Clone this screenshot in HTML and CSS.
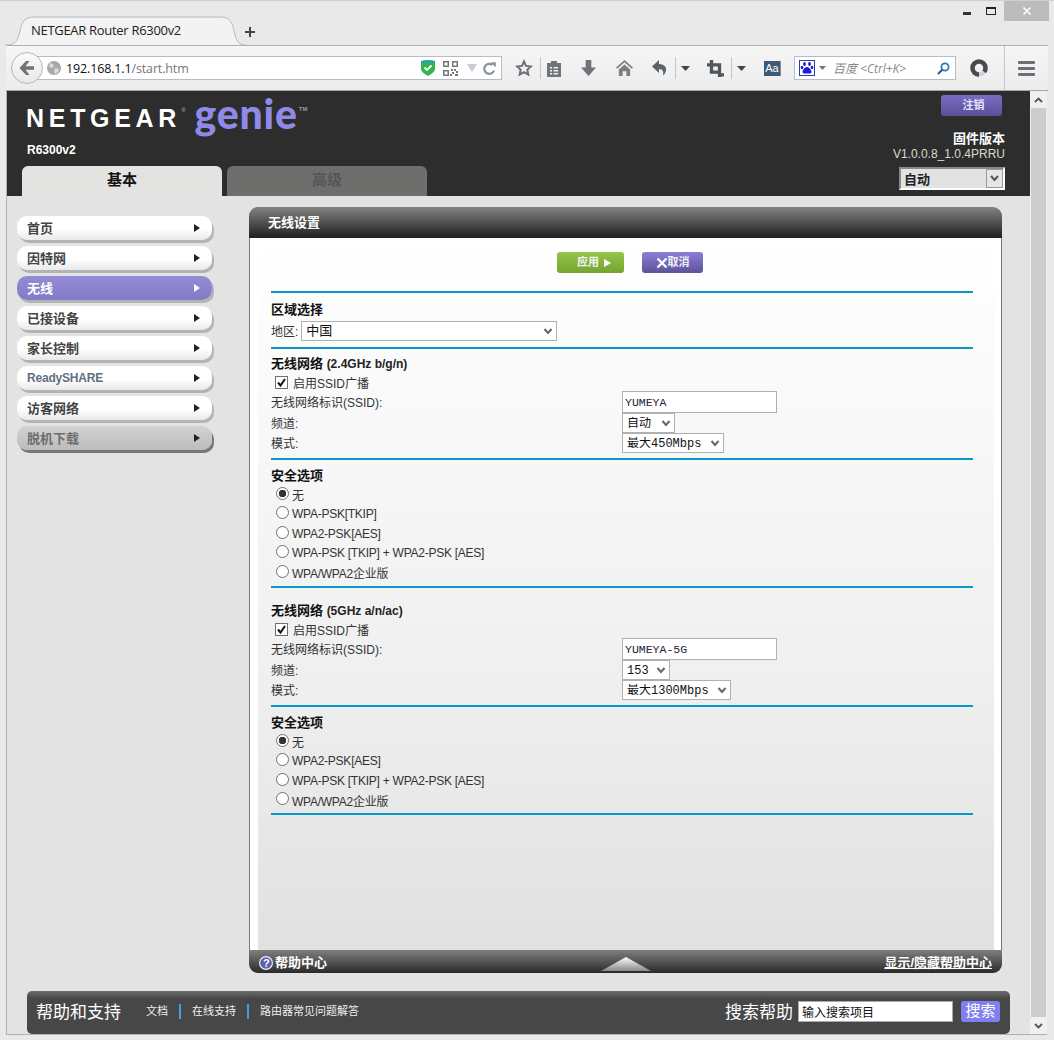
FILE: index.html
```html
<!DOCTYPE html>
<html lang="zh">
<head>
<meta charset="utf-8">
<title>NETGEAR Router R6300v2</title>
<link rel="stylesheet" href="styles.css">
</head>
<body>
<div class="window">
  <div class="tabbar">
    <div class="tab">
      <svg class="tab-shape" width="240" height="30" viewBox="0 0 240 30"><path d="M0 29C9 29 12 25 14 15 16 5 19 1 29 1H214C223 1 226 5 228 15 230 25 233 29 240 29" fill="#f3f3f3" stroke="#b4bcc4"/></svg>
      <span class="tab-title">NETGEAR Router R6300v2</span>
    </div>
    <svg class="newtab" width="12" height="12" viewBox="0 0 12 12"><path d="M6 1v10M1 6h10" stroke="#444" stroke-width="2"/></svg>
    <div class="winctl">
      <span class="win-min"></span>
      <span class="win-max"></span>
      <span class="win-close"><svg width="10" height="10" viewBox="0 0 10 10"><path d="M1.500 1.500l7 7M8.500 1.500l-7 7" stroke="#fff" stroke-width="1.600"/></svg></span>
    </div>
  </div>

  <div class="toolbar">
    <div class="backbtn"><svg width="18" height="16" viewBox="0 0 18 16"><path d="M8 1L1.500 8 8 15h3.500L7.500 9.800H16V6.200H7.500L11.500 1z" fill="#6f7378"/></svg></div>
    <div class="urlbar">
      <svg class="globe" width="14" height="14" viewBox="0 0 14 14"><circle cx="7" cy="7" r="7" fill="#a6a8aa"/><path d="M3 2l3 1 1 2-2 2-3-1zM8 7l4 1-1 3-3 2-1-3z" fill="#dcdcdc"/></svg>
      <span class="url"><b>192.168.1.1</b><i>/start.htm</i></span>
      <svg class="u-shield" width="14" height="16" viewBox="0 0 14 16"><path d="M0 1l7-1 7 1v8c0 3-4 5-7 7-3-2-7-4-7-7z" fill="#35b44a"/><path d="M0 1l7-1 7 1v2H0z" fill="#2a9fb0"/><path d="M3.500 7.500l2.500 2.500 4.500-4.500" stroke="#fff" stroke-width="1.800" fill="none"/></svg>
      <svg class="u-qr" width="15" height="15" viewBox="0 0 15 15"><path d="M0 0h6v6H0zM1.500 1.500v3h3v-3zM9 0h6v6H9zm1.500 1.500v3h3v-3zM0 9h6v6H0zm1.500 1.500v3h3v-3zM8 8h2v2H8zM11 8h2v2h-2zM13 10h2v2h-2zM9 11h2v2H9zM12 13h3v2h-3zM7 13h2v2H7z" fill="#777" fill-rule="evenodd"/></svg>
      <svg class="u-drop" width="10" height="8" viewBox="0 0 10 8"><path d="M0 0h10L5 8z" fill="#c6ccd6"/></svg>
      <svg class="u-reload" width="13" height="13" viewBox="0 0 13 13"><path d="M11 8.500A5 5 0 1 1 9.500 3" stroke="#8a9096" stroke-width="2.200" fill="none"/><path d="M8 0l5 .5-.5 5z" fill="#8a9096"/></svg>
    </div>
    <svg class="t-star" width="18" height="18" viewBox="0 0 18 18"><path d="M9 2.500l2 4.400 4.800.6-3.500 3.300 1 4.800L9 13.200l-4.300 2.400 1-4.800-3.500-3.300 4.800-.6z" fill="none" stroke="#6a7076" stroke-width="2"/></svg>
    <span class="t-sep t-sep1"></span>
    <svg class="t-clip" width="16" height="17" viewBox="0 0 16 17"><path d="M1 3h4V1h6v2h4v14H1zM4 7v1.500h2V7zm3.500 0v1.500H12V7zM4 10v1.500h2V10zm3.500 0v1.500H12V10zM4 13v1.500h2V13zm3.500 0v1.500H12V13z" fill="#6e7479" fill-rule="evenodd"/></svg>
    <svg class="t-down" width="15" height="16" viewBox="0 0 16 17"><path d="M5 0h6v8h5l-8 9-8-9h5z" fill="#6e7479"/></svg>
    <svg class="t-home" width="17" height="16" viewBox="0 0 18 17"><path d="M9 0l9 8-1.300 1.300L9 2.500 1.300 9.300 0 8zM3 10l6-5.300L15 10v7h-4v-5H7v5H3z" fill="#7a7f84"/></svg>
    <svg class="t-undo" width="18" height="16" viewBox="0 0 18 16"><path d="M8 0L1 6.500 8 13V9.200c3-.4 5 1.300 4 6.300 4-3 5.500-10.900-4-11.500z" fill="#5c6369"/></svg>
    <span class="t-sep t-sep2"></span>
    <svg class="t-caret t-caret1" width="9" height="5" viewBox="0 0 9 5"><path d="M0 0h9L4.500 5z" fill="#444"/></svg>
    <svg class="t-crop" width="17" height="17" viewBox="0 0 18 18"><path d="M3 0h3.500v3.500H15V14h3v3.500h-3V18h-3.500v-3.500H3V7H0V3.500h3zM6.500 7v4H11.500V7z" fill="#4f565c" fill-rule="evenodd"/></svg>
    <span class="t-sep t-sep3"></span>
    <svg class="t-caret t-caret2" width="9" height="5" viewBox="0 0 9 5"><path d="M0 0h9L4.500 5z" fill="#444"/></svg>
    <span class="t-aa">Aa</span>
    <div class="searchbar">
      <svg class="paw" width="16" height="16" viewBox="0 0 16 16"><rect x=".5" y=".5" width="15" height="15" fill="#fff" stroke="#2244aa"/><g fill="#1a1ae0"><ellipse cx="5.500" cy="4" rx="1.400" ry="1.900"/><ellipse cx="10.500" cy="4" rx="1.400" ry="1.900"/><ellipse cx="3" cy="7.500" rx="1.300" ry="1.700"/><ellipse cx="13" cy="7.500" rx="1.300" ry="1.700"/><path d="M8 7c2 0 4.500 3 4.500 5 0 2-2.500 1.500-4.500 1.500S3.500 14 3.500 12c0-2 2.500-5 4.500-5z"/></g></svg>
      <svg class="paw-caret" width="7" height="4" viewBox="0 0 7 4"><path d="M0 0h7L3.500 4z" fill="#777"/></svg>
      <span class="search-hint">百度 &lt;Ctrl+K&gt;</span>
      <svg class="mag" width="13" height="13" viewBox="0 0 13 13"><circle cx="8" cy="5" r="3.600" fill="none" stroke="#2f78c0" stroke-width="1.800"/><path d="M5.500 7.500L1 12" stroke="#2460a0" stroke-width="2.200"/></svg>
    </div>
    <svg class="t-avatar" width="18" height="18" viewBox="0 0 18 18"><circle cx="9" cy="9" r="6.500" fill="none" stroke="#cfd2d4" stroke-width="4"/><circle cx="9" cy="9" r="6.500" fill="none" stroke="#454b50" stroke-width="4.500" stroke-dasharray="34 6.800" transform="rotate(90 9 9)"/></svg>
    <span class="t-sep t-sep4"></span>
    <span class="t-menu"><i></i><i></i><i></i></span>
  </div>

  <div class="viewport">
    <div class="page">
      <header class="head">
        <div class="brand">
          <div class="logo"><span class="logo-ng">NETGEAR</span><span class="logo-reg">®</span><span class="logo-genie">genie</span><span class="logo-tm">TM</span></div>
          <div class="model">R6300v2</div>
          <nav class="tabs">
            <span class="ptab ptab-on">基本</span>
            <span class="ptab ptab-off">高级</span>
          </nav>
        </div>
        <div class="head-right">
          <span class="logout">注销</span>
          <div class="fw-label">固件版本</div>
          <div class="fw-ver">V1.0.0.8_1.0.4PRRU</div>
          <select class="lang"><option>自动</option></select>
        </div>
      </header>

      <div class="main">
        <aside class="side">
          <div class="mbtn">首页<span class="arr"></span></div>
          <div class="mbtn">因特网<span class="arr"></span></div>
          <div class="mbtn mbtn-on">无线<span class="arr"></span></div>
          <div class="mbtn">已接设备<span class="arr"></span></div>
          <div class="mbtn">家长控制<span class="arr"></span></div>
          <div class="mbtn mbtn-rs">ReadySHARE<span class="arr"></span></div>
          <div class="mbtn">访客网络<span class="arr"></span></div>
          <div class="mbtn mbtn-off">脱机下载<span class="arr"></span></div>
        </aside>

        <section class="panel">
          <div class="panel-head">无线设置</div>
          <div class="panel-body">
            <div class="inner">
              <div class="actions">
                <span class="act act-apply">应用<span class="act-arr"></span></span>
                <span class="act act-cancel"><svg width="12" height="12" viewBox="0 0 12 12"><path d="M1.500 1.500l9 9M10.500 1.500l-9 9" stroke="#fff" stroke-width="2.400"/></svg>取消</span>
              </div>

              <div class="sec sec-region">
                <div class="title">区域选择</div>
                <div class="region"><span>地区:</span><select class="sel sel-region"><option>中国</option></select></div>
              </div>

              <div class="sec sec-net1">
                <div class="title">无线网络 <small>(2.4GHz b/g/n)</small></div>
                <label class="chk"><input type="checkbox" checked>启用SSID广播</label>
                <div class="field field-ssid"><span>无线网络标识(SSID):</span><input class="txt" type="text" value="YUMEYA"></div>
                <div class="field"><span>频道:</span><select class="sel sel-auto"><option>自动</option></select></div>
                <div class="field"><span>模式:</span><select class="sel sel-450"><option>最大450Mbps</option></select></div>
              </div>

              <div class="sec sec-sec1">
                <div class="title">安全选项</div>
                <label class="opt"><input type="radio" name="s1" checked>无</label>
                <label class="opt"><input type="radio" name="s1">WPA-PSK[TKIP]</label>
                <label class="opt"><input type="radio" name="s1">WPA2-PSK[AES]</label>
                <label class="opt"><input type="radio" name="s1">WPA-PSK [TKIP] + WPA2-PSK [AES]</label>
                <label class="opt"><input type="radio" name="s1">WPA/WPA2企业版</label>
              </div>

              <div class="sec sec-net2">
                <div class="title">无线网络 <small>(5GHz a/n/ac)</small></div>
                <label class="chk"><input type="checkbox" checked>启用SSID广播</label>
                <div class="field field-ssid"><span>无线网络标识(SSID):</span><input class="txt" type="text" value="YUMEYA-5G"></div>
                <div class="field"><span>频道:</span><select class="sel sel-153"><option>153</option></select></div>
                <div class="field"><span>模式:</span><select class="sel sel-1300"><option>最大1300Mbps</option></select></div>
              </div>

              <div class="sec sec-sec2">
                <div class="title">安全选项</div>
                <label class="opt"><input type="radio" name="s2" checked>无</label>
                <label class="opt"><input type="radio" name="s2">WPA2-PSK[AES]</label>
                <label class="opt"><input type="radio" name="s2">WPA-PSK [TKIP] + WPA2-PSK [AES]</label>
                <label class="opt"><input type="radio" name="s2">WPA/WPA2企业版</label>
              </div>
              <div class="sec sec-end"></div>
            </div>
          </div>
          <div class="panel-foot">
            <span class="foot-help"><svg width="14" height="14" viewBox="0 0 14 14"><circle cx="7" cy="7" r="7" fill="#eef"/><circle cx="7" cy="7" r="5.800" fill="#5a5fa8"/></svg><em>?</em>帮助中心</span>
            <svg class="foot-tri" width="50" height="14" viewBox="0 0 50 14"><defs><linearGradient id="tri" x1="0" y1="0" x2="0" y2="1"><stop offset="0" stop-color="#fff"/><stop offset="1" stop-color="#888"/></linearGradient></defs><path d="M25 0l25 14H0z" fill="url(#tri)"/></svg>
            <a class="foot-link">显示/隐藏帮助中心</a>
          </div>
        </section>
      </div>

      <footer class="help">
        <span class="help-title">帮助和支持</span>
        <a class="hl hl-doc">文档</a>
        <a class="hl hl-mid">在线支持</a>
        <a class="hl hl-mid">路由器常见问题解答</a>
        <span class="help-search">搜索帮助</span>
        <input class="help-input" type="text" value="输入搜索项目">
        <span class="help-btn">搜索</span>
      </footer>
    </div>

    <div class="scroll">
      <span class="sb-btn"><svg width="9" height="6" viewBox="0 0 9 6"><path d="M1 5l3.500-3.500L8 5" fill="none" stroke="#555" stroke-width="1.800"/></svg></span>
      <span class="sb-thumb"></span>
      <span class="sb-btn"><svg width="9" height="6" viewBox="0 0 9 6"><path d="M1 1l3.500 3.500L8 1" fill="none" stroke="#555" stroke-width="1.800"/></svg></span>
    </div>
  </div>
</div>
</body>
</html>
```
FILE: styles.css
```css
* { box-sizing: border-box; }
html, body { margin: 0; padding: 0; }
body {
  width: 1054px;
  height: 1040px;
  overflow: hidden;
  background: #e9e9e9;
  font-family: "Liberation Sans", "Noto Sans CJK SC", sans-serif;
  font-size: 12px;
  color: #222;
}
.window {
  height: 1040px;
  border-top: 1px solid #d0d0d0;
  padding: 0 6px;
  display: flex;
  flex-direction: column;
}

/* tab strip */
.tabbar { height: 44px; flex: none; display: flex; align-items: flex-start; margin: 0 -6px 0 0; }
.tab { position: relative; width: 240px; height: 44px; }
.tab-shape { position: absolute; left: 0; bottom: -1px; }
.tab-title {
  position: absolute; left: 25px; top: 21px;
  font: 13px/16px "Open Sans", "Noto Sans", sans-serif;
  letter-spacing: -.3px;
  color: #222;
}
.newtab { margin: 25px 0 0 -2px; }
.winctl { margin-left: auto; display: flex; align-items: flex-start; padding-right: 5px; }
.win-min { width: 8px; height: 3px; background: #333; margin-top: 11px; }
.win-max { width: 10px; height: 8px; border: 1px solid #222; border-top-width: 2px; margin: 6px 0 0 15px; }
.win-close { width: 45px; height: 20px; background: #bcbcbc; margin-left: 8px; display: flex; align-items: center; justify-content: center; }

/* toolbar */
.toolbar {
  height: 46px;
  flex: none;
  border-top: 1px solid #a9b1b9;
  border-bottom: 1px solid #a6a6a6;
  background: linear-gradient(#f6f6f6, #ececec);
  display: flex;
  align-items: center;
  position: relative;
}
.toolbar > svg { flex: none; }
.backbtn {
  width: 32px; height: 32px; flex: none;
  border-radius: 50%;
  border: 1px solid #b3b9bf;
  background: linear-gradient(#fbfbfb, #e8e8e8);
  margin-left: 5px;
  display: flex; align-items: center; justify-content: center;
  position: relative; z-index: 1;
}
.urlbar {
  width: 472px; height: 24px; flex: none;
  margin-left: -13px;
  background: #fff;
  border: 1px solid #b5bec8;
  display: flex; align-items: center;
}
.globe { margin-left: 16px; }
.url { margin-left: 5px; font: 12.500px "Open Sans", "Noto Sans", sans-serif; letter-spacing: -.14px; }
.url b { font-weight: 400; color: #111; }
.url i { font-style: normal; color: #777; }
.u-shield { margin-left: auto; }
.u-qr { margin-left: 8px; }
.u-drop { margin-left: 9px; }
.u-reload { margin: 0 5px 0 6px; }

.t-star { margin-left: 13px; }
.t-sep { width: 1px; height: 22px; background: #c2c6ca; flex: none; }
.t-sep1 { margin-left: 7px; }
.t-clip { margin-left: 5px; }
.t-down { margin-left: 19px; }
.t-home { margin-left: 20px; }
.t-undo { margin-left: 18px; }
.t-sep2 { margin-left: 6px; }
.t-caret { margin-left: 5px; }
.t-crop { margin-left: 17px; }
.t-sep3 { margin-left: 7px; }
.t-aa {
  margin-left: 18px; width: 17px; height: 15px; flex: none;
  background: #3c5a78;
  border-right: 1px solid #889;
  color: #fff;
  font: 11px/15px "Liberation Sans", sans-serif;
  text-align: center;
}
.searchbar {
  width: 162px; height: 24px; flex: none;
  margin-left: 13px;
  background: #fff;
  border: 1px solid #b5bec8;
  display: flex; align-items: center;
  padding-left: 4px;
}
.paw-caret { margin-left: 4px; }
.search-hint { margin-left: 7px; font: italic 12px "Open Sans", "Noto Sans CJK SC", sans-serif; color: #8a8a8a; white-space: nowrap; }
.mag { margin-left: auto; margin-right: 5px; }
.t-avatar { margin-left: 14px; }
.t-sep4 { margin-left: 16px; height: 44px; }
.t-menu { margin-left: 13px; width: 17px; flex: none; display: flex; flex-direction: column; gap: 3px; }
.t-menu i { height: 3px; background: #6a7075; border-radius: 1px; }

/* viewport */
.viewport { flex: none; height: 944px; margin-left: 1px; display: flex; border-bottom: 1px solid #a9b1b9; width: 1040px; box-shadow: -1px 0 0 #a9b1b9; }
.page { width: 1023px; flex: none; background: #e3e3e3; display: flex; flex-direction: column; }
.scroll { width: 17px; flex: none; background: #f0f0f0; display: flex; flex-direction: column; padding: 0 1px; }
.sb-btn { height: 17px; flex: none; display: flex; align-items: center; justify-content: center; }
.sb-thumb { flex: 1; background: #cdcdcd; }

/* header */
.head { height: 105px; flex: none; background: #2d2d2d; display: flex; justify-content: space-between; }
.brand { padding: 0 0 0 15px; display: flex; flex-direction: column; }
.logo { height: 48px; display: flex; align-items: flex-start; white-space: nowrap; color: #fff; padding-left: 4px; }
.logo-ng { font: 700 25px/26px "Liberation Sans", sans-serif; letter-spacing: 4.700px; margin-top: 14px; }
.logo-reg { font: 400 6px/8px "Liberation Sans", sans-serif; color: #bbb; margin: 15px 0 0 0; }
.logo-genie { font: 900 41px/41px "Lato", sans-serif; color: #8f8ae8; margin: 2px 0 0 9px; letter-spacing: .8px; }
.logo-tm { font: 700 6px/8px "Liberation Sans", sans-serif; color: #999; margin: 14px 0 0 1px; }
.model { height: 27px; padding: 3px 0 0 5px; font: 700 12px/16px "Liberation Sans", sans-serif; color: #fff; }
.tabs { display: flex; gap: 5px; }
.ptab { width: 200px; height: 30px; border-radius: 6px 6px 0 0; text-align: center; font-weight: 700; font-size: 15px; line-height: 28px; }
.ptab-on { background: #e3e4e2; color: #111; }
.ptab-off { background: #6e6f6d; color: #565656; }

.head-right { width: 200px; padding: 4px 25px 0 0; display: flex; flex-direction: column; align-items: flex-end; }
.logout {
  width: 61px; height: 21px; margin-right: 3px;
  padding-left: 4px;
  background: linear-gradient(#7a6ec2, #5a4f98);
  border-radius: 3px;
  color: #e8e4ff;
  font-size: 11px; font-weight: 700; line-height: 20px; text-align: center;
}
.fw-label { margin-top: 15px; font-size: 13px; font-weight: 700; line-height: 16px; color: #fff; }
.fw-ver { font-size: 12px; line-height: 14px; color: #d9d9c9; }
.lang {
  appearance: none;
  width: 106px; height: 23px; margin-top: 6px;
  border: 2px solid; border-color: #8a8a8a #fff #fff #8a8a8a;
  border-radius: 0;
  padding: 0 0 0 3px;
  font: 700 13px "Noto Sans CJK SC", sans-serif;
  color: #222;
  background: #e2e2e2 url("data:image/svg+xml,%3Csvg xmlns='http://www.w3.org/2000/svg' width='17' height='19'%3E%3Crect x='.5' y='.5' width='16' height='18' fill='%23e6e6e6' stroke='%23999'/%3E%3Cpath d='M5 7l3.500 4L12 7' fill='none' stroke='%23555' stroke-width='2'/%3E%3C/svg%3E") no-repeat right center;
}

/* main */
.main { height: 795px; flex: none; display: flex; padding: 11px 0 0 10px; }
.side { width: 232px; flex: none; padding-top: 9px; display: flex; flex-direction: column; gap: 6px; }
.mbtn {
  width: 195px; height: 24px; flex: none;
  border-radius: 10px;
  background: linear-gradient(#fff 55%, #e9e9e9);
  box-shadow: 2px 3px 0 #b4b4b4;
  padding-left: 10px;
  font-size: 13px; font-weight: 700; line-height: 23px;
  color: #444;
  display: flex; align-items: center; justify-content: space-between; padding-right: 12px;
}
.mbtn-rs { color: #5f6f80; font-size: 12px; letter-spacing: -.2px; }
.mbtn-on { background: linear-gradient(#938bd6, #837bc6); color: #fff; }
.mbtn-off { background: linear-gradient(#d2d2d2, #bcbcbc); color: #6e6e6e; box-shadow: 2px 3px 0 #777; }
.arr { width: 0; height: 0; border-left: 6px solid #222; border-top: 4px solid transparent; border-bottom: 4px solid transparent; }
.mbtn-on .arr { border-left-color: #fff; }

.panel { width: 753px; height: 766px; flex: none; display: flex; flex-direction: column; }
.panel-head {
  height: 31px; flex: none;
  border-radius: 9px 9px 0 0;
  background: linear-gradient(#828282, #1f1f1f);
  padding-left: 19px;
  color: #fff; font-size: 13px; font-weight: 700; line-height: 31px;
}
.panel-body { height: 712px; flex: none; background: #fff; border: solid #777; border-width: 0 1px; display: flex; padding: 0 7px 0 8px; }
.inner { flex: 1; background: linear-gradient(#fff, #f6f6f6 35%, #f0f0f0 60%, #e1e1e1); padding: 14px 0 0 13px; }
.actions { height: 39px; padding-left: 286px; display: flex; gap: 18px; align-items: flex-start; }
.act {
  height: 21px; border-radius: 3px; color: #f2f2f2;
  font-size: 11px; font-weight: 700; line-height: 19px;
  display: flex; align-items: center; justify-content: center;
}
.act-apply { width: 67px; padding-left: 7px; background: linear-gradient(#94c64a, #76a32e); gap: 5px; }
.act-arr { width: 0; height: 0; border-left: 7px solid #fff; border-top: 4px solid transparent; border-bottom: 4px solid transparent; }
.act-cancel { width: 61px; background: linear-gradient(#8a7fd8, #5d5298); }

.sec { width: 702px; border-top: 2px solid #0a96c8; }
.title { height: 20px; font-size: 13px; font-weight: 700; line-height: 20px; color: #111; }
.title small { font-size: 12px; color: #222; }
.sec-region { height: 56px; padding-top: 7px; }
.region { height: 22px; display: flex; align-items: center; gap: 3px; color: #333; }
.region span { padding-bottom: 1px; }
.sec-net1 { height: 111px; padding-top: 5px; }
.sec-sec1 { height: 128px; padding-top: 6px; }
.sec-net2 { height: 119px; padding-top: 13px; }
.sec-sec2 { height: 108px; padding-top: 6px; }
.sec-sec1 .title, .sec-sec2 .title { height: 19px; }
.sec-end { height: 2px; }

.chk { height: 17px; display: flex; align-items: center; padding-left: 4px; color: #333; }
.chk input {
  appearance: none; width: 13px; height: 13px; margin: 0 5px 0 0; flex: none;
  border: 1px solid #707070;
  background: #fff url("data:image/svg+xml,%3Csvg xmlns='http://www.w3.org/2000/svg' width='11' height='11'%3E%3Cpath d='M2 5.500l2.500 3L9 2' fill='none' stroke='%23111' stroke-width='2'/%3E%3C/svg%3E") no-repeat center;
}
.field { height: 20px; display: grid; grid-template-columns: 351px auto; justify-content: start; align-items: center; color: #333; }
.field span { padding-bottom: 2px; }
.field-ssid { height: 22px; }
.opt { height: 19.500px; display: flex; align-items: center; padding-left: 5px; color: #333; letter-spacing: -.25px; }
.opt input {
  appearance: none; width: 13px; height: 13px; margin: 0 3px 3px 0; flex: none;
  border: 1px solid #707070; border-radius: 50%;
  background: #fff;
}
.opt input:checked { background: radial-gradient(circle, #333 0 3.500px, #fff 4px); }

.sel {
  appearance: none;
  height: 20px;
  border: 1px solid #b0b0b0;
  border-radius: 0;
  padding: 2px 0 0 4px;
  font: 12px "Liberation Mono", "Noto Sans CJK SC", monospace;
  color: #111;
  background: #fff url("data:image/svg+xml,%3Csvg xmlns='http://www.w3.org/2000/svg' width='10' height='7'%3E%3Cpath d='M1.500 1l3.500 4 3.500-4' fill='none' stroke='%23666' stroke-width='2'/%3E%3C/svg%3E") no-repeat right 3px center;
}
.sel-region { width: 256px; font-size: 13px; padding-top: 0; }
.sel-auto { width: 53px; }
.sel-450 { width: 102px; }
.sel-153 { width: 48px; }
.sel-1300 { width: 109px; }
.txt {
  width: 155px; height: 22px;
  border: 1px solid #b0b0b0;
  padding: 0 2px;
  background: #fff;
  font: 11.500px "Liberation Mono", monospace;
  color: #223;
}

.panel-foot {
  height: 23px; flex: none;
  border-radius: 0 0 9px 9px;
  background: linear-gradient(#7f7f7f, #2a2a2a);
  display: grid; grid-template-columns: 1fr auto 1fr; align-items: end;
  color: #fff; font-size: 13px; font-weight: 700;
  padding: 0 10px;
}
.foot-help { display: flex; align-items: center; line-height: 18px; position: relative; gap: 2px; padding-bottom: 1px; }
.foot-help em { position: absolute; left: 4px; font-style: normal; font-size: 11px; }
.foot-tri { margin-bottom: 2px; }
.foot-link { justify-self: end; text-decoration: underline; line-height: 18px; padding-bottom: 1px; }

/* help bar */
.help {
  width: 983px; height: 43px; flex: none;
  margin-left: 20px;
  border-radius: 5px;
  background: linear-gradient(#6a6a6a, #464746 18%);
  padding: 0 0 2px 9px;
  display: flex; align-items: center;
  color: #fff;
}
.help-title { font-size: 17px; width: 110px; margin-bottom: 2px; }
.hl { font-size: 11px; color: #f0f0f0; line-height: 15px; }
.hl-mid { border-left: 2px solid #3aa4d8; padding-left: 11px; margin-left: 11px; }
.help-search { margin-left: auto; font-size: 17px; margin-bottom: 2px; }
.help-input {
  width: 155px; height: 21px; margin-left: 5px;
  border: 1px solid #aaa;
  padding: 0 3px 1px;
  font: 12px "Noto Sans CJK SC", sans-serif;
  color: #111;
}
.help-btn {
  width: 39px; height: 21px; margin: 0 10px 0 8px;
  background: #7f7ff0; border-radius: 3px;
  text-align: center; font-size: 15px; line-height: 20px;
}
```
